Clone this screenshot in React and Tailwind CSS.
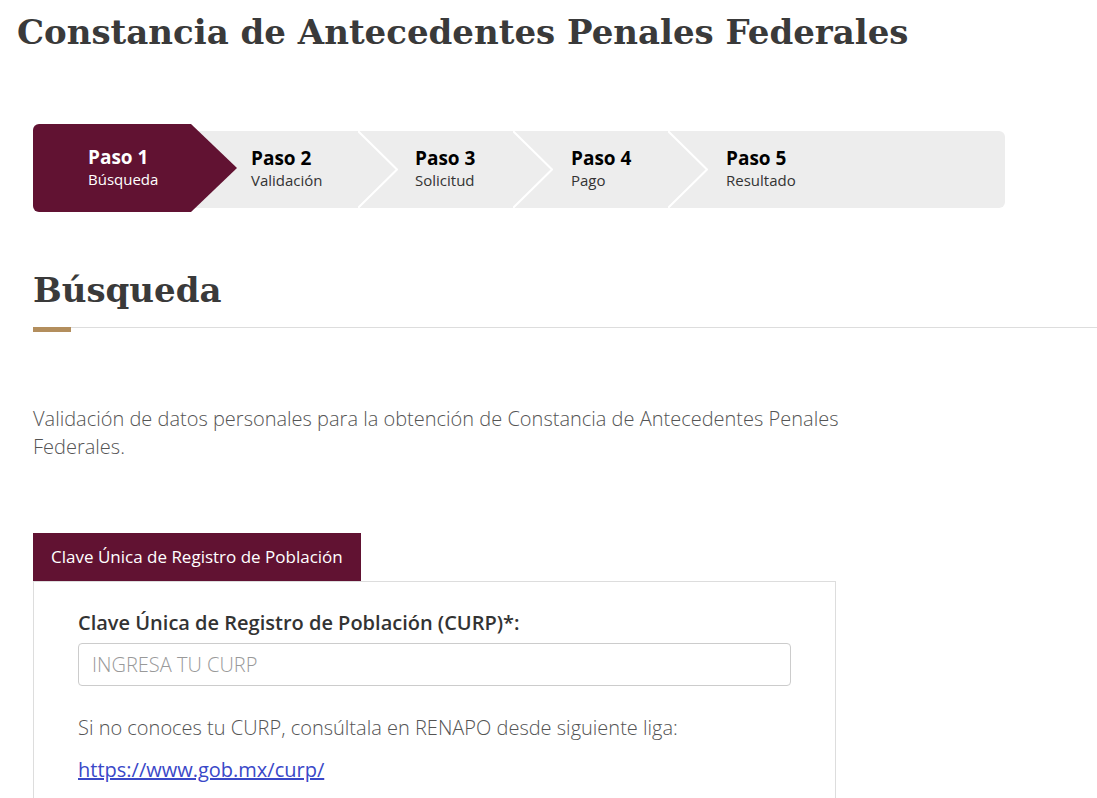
const steps = [
  { title: "Paso 2", label: "Validación", width: "w-[167px] pl-[60px]" },
  { title: "Paso 3", label: "Solicitud", width: "w-[155px] pl-[57px]" },
  { title: "Paso 4", label: "Pago", width: "w-[155px] pl-[58px]" },
];

function Chevron() {
  return (
    <svg
      className="absolute left-full top-0 z-[1] h-full w-[40px]"
      viewBox="0 0 40 77"
      preserveAspectRatio="none"
    >
      <polyline points="0,0 39,38.5 0,77" fill="none" stroke="#ffffff" strokeWidth="2" />
    </svg>
  );
}

function Stepper() {
  return (
    <div className="mt-[75px] flex h-[77px] w-[972px] rounded-md bg-[#ededed]">
      <div className="relative z-10 -mt-[7px] -mb-[4px] flex w-[158px] shrink-0 flex-col justify-center rounded-l-md bg-[#611232] pb-[2px] pl-[55px] text-white">
        <span className="text-[19px] font-bold leading-[23px]">Paso 1</span>
        <span className="text-[15px] leading-[20px]">Búsqueda</span>
        <svg
          className="absolute left-full top-0 h-full w-[46px]"
          viewBox="0 0 46 88"
          preserveAspectRatio="none"
        >
          <polygon points="0,0 46,44 0,88" fill="#611232" />
        </svg>
      </div>
      {steps.map((s) => (
        <div key={s.title} className={`relative flex shrink-0 flex-col justify-center pb-[2px] ${s.width}`}>
          <span className="text-[19px] font-bold leading-[23px] text-black">{s.title}</span>
          <span className="text-[15px] leading-[20px] text-[#333]">{s.label}</span>
          <Chevron />
        </div>
      ))}
      <div className="flex flex-1 flex-col justify-center pb-[2px] pl-[58px]">
        <span className="text-[19px] font-bold leading-[23px] text-black">Paso 5</span>
        <span className="text-[15px] leading-[20px] text-[#333]">Resultado</span>
      </div>
    </div>
  );
}

export default function App() {
  return (
    <div className="min-h-screen overflow-hidden bg-white font-['Open_Sans',sans-serif] text-[#333]">
      <h1 className="pl-[17px] pt-[8px] font-['DejaVu_Serif',serif] text-[34px] font-bold leading-[48px] text-[#3a3a3a]">
        Constancia de Antecedentes Penales Federales
      </h1>

      <div className="pl-[33px]">
        <Stepper />

        <h2 className="mt-[58px] font-['DejaVu_Serif',serif] text-[34px] font-bold leading-[48px] text-[#3a3a3a]">
          Búsqueda
        </h2>
        <div className="mt-[13px] border-t border-[#dddddd]">
          <div className="-mt-px h-[5px] w-[38px] bg-[#b38e5d]" />
        </div>

        <p className="mt-[73px] w-[820px] text-[20px] font-light leading-[28px] text-[#545454]">
          Validación de datos personales para la obtención de Constancia de Antecedentes Penales Federales.
        </p>

        <div className="mt-[72px] w-[803px]">
          <div className="inline-block h-[48px] bg-[#611232] px-[18px] text-[17px] leading-[48px] text-white">
            Clave Única de Registro de Población
          </div>
          <div className="border border-[#dddddd] px-[44px] pb-[40px] pt-[28px]">
            <label className="block text-[20px] font-semibold leading-[26px] text-[#333]">
              Clave Única de Registro de Población (CURP)*:
            </label>
            <input
              type="text"
              placeholder="INGRESA TU CURP"
              className="mt-[7px] block h-[43px] w-full rounded border border-[#cccccc] px-[13px] text-[20px] font-light text-[#333] placeholder:text-[#999]"
            />
            <p className="mt-[28px] text-[20px] font-light leading-[28px] text-[#545454]">
              Si no conoces tu CURP, consúltala en RENAPO desde siguiente liga:
            </p>
            <a
              href="#"
              className="mt-[14px] block text-[20px] leading-[28px] text-[#3a48c8] underline"
            >
              https://www.gob.mx/curp/
            </a>
          </div>
        </div>
      </div>
    </div>
  );
}
